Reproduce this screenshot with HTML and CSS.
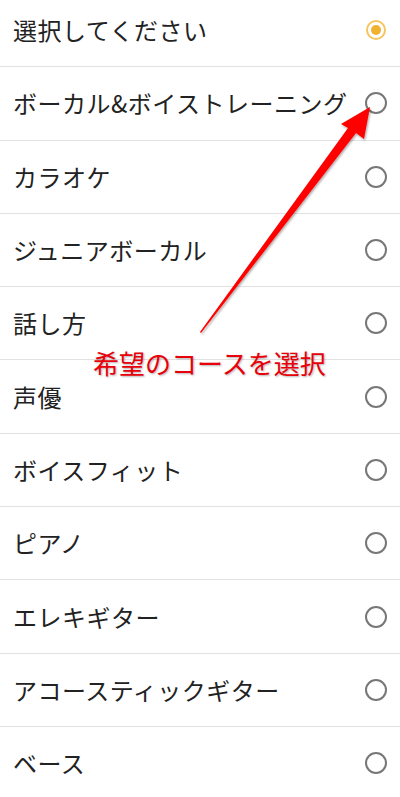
FILE: index.html
```html
<!DOCTYPE html>
<html lang="ja">
<head>
<meta charset="utf-8">
<title>コース選択</title>
<link rel="stylesheet" href="styles.css">
</head>
<body>
<div class="screen">
  <ul class="list">
    <li class="row"><span class="label">選択してください</span><span class="radio checked"></span></li>
    <li class="row"><span class="label">ボーカル&amp;ボイストレーニング</span><span class="radio"></span></li>
    <li class="row"><span class="label">カラオケ</span><span class="radio"></span></li>
    <li class="row"><span class="label">ジュニアボーカル</span><span class="radio"></span></li>
    <li class="row"><span class="label">話し方</span><span class="radio"></span></li>
    <li class="row"><span class="label">声優</span><span class="radio"></span></li>
    <li class="row"><span class="label">ボイスフィット</span><span class="radio"></span></li>
    <li class="row"><span class="label">ピアノ</span><span class="radio"></span></li>
    <li class="row"><span class="label">エレキギター</span><span class="radio"></span></li>
    <li class="row"><span class="label">アコースティックギター</span><span class="radio"></span></li>
    <li class="row"><span class="label">ベース</span><span class="radio"></span></li>
  </ul>
  <svg class="arrow" width="400" height="797" viewBox="0 0 400 797">
    <defs>
      <filter id="sh" x="-20%" y="-20%" width="140%" height="140%">
        <feDropShadow dx="1" dy="1.5" stdDeviation="1.2" flood-color="#000" flood-opacity="0.35"/>
      </filter>
    </defs>
    <polygon filter="url(#sh)" fill="#ff0000" points="200,332 348,128 341,124 370,107 364,139 356,133 201,333"/>
  </svg>
  <div class="note">希望のコースを選択</div>
</div>
</body>
</html>
```
FILE: styles.css
```css
html, body {
  margin: 0;
  padding: 0;
  background: #ffffff;
}
body {
  width: 400px;
  height: 797px;
  overflow: hidden;
  font-family: "Noto Sans CJK JP", "Noto Sans", sans-serif;
}
.screen {
  position: relative;
  width: 400px;
  height: 797px;
  overflow: hidden;
}
.list {
  list-style: none;
  margin: -6px 0 0 0;
  padding: 0;
}
.row {
  box-sizing: border-box;
  height: 73.3px;
  display: flex;
  align-items: center;
  justify-content: space-between;
  padding: 0 13px 0 13px;
  border-bottom: 1.5px solid #e2e2e2;
}
.label {
  font-size: 24px;
  line-height: 1;
  letter-spacing: 0.5px;
  color: #222222;
}
.radio {
  box-sizing: border-box;
  width: 22px;
  height: 22px;
  border: 2px solid #777777;
  border-radius: 50%;
  flex: none;
}
.radio.checked {
  width: 20px;
  height: 20px;
  margin-right: 1px;
  border: 2px solid #f6c55e;
  display: flex;
  align-items: center;
  justify-content: center;
}
.radio.checked::after {
  content: "";
  width: 10px;
  height: 10px;
  border-radius: 50%;
  background: #f0b030;
}
.arrow {
  position: absolute;
  left: 0;
  top: 0;
  pointer-events: none;
}
.note {
  position: absolute;
  left: 93px;
  top: 350px;
  font-size: 26px;
  line-height: 26px;
  color: #e8000a;
  white-space: nowrap;
  text-shadow: 1px 1px 2px rgba(0, 0, 0, 0.3);
}
```
